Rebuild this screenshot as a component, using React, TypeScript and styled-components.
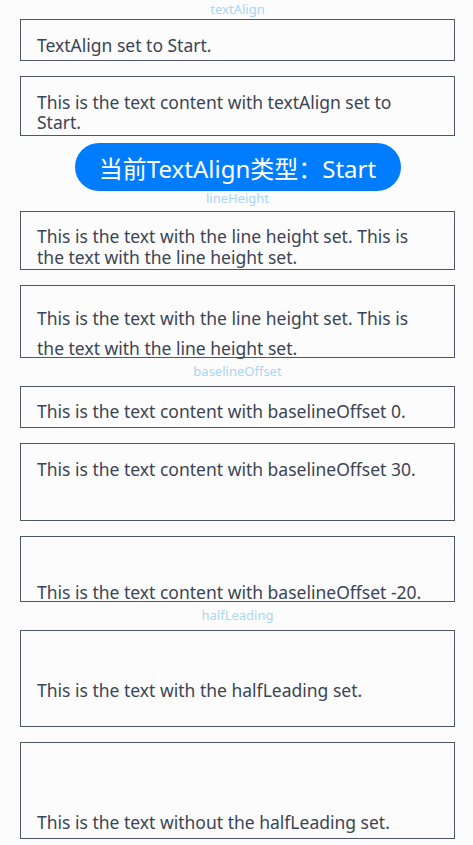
import React from "react";
import styled, { createGlobalStyle } from "styled-components";

const GlobalStyle = createGlobalStyle`
  html, body {
    margin: 0;
    padding: 0;
    background: #fcfcfc;
  }
  body {
    font-family: "Noto Sans", "Noto Sans CJK SC", sans-serif;
  }
`;

const Page = styled.div`
  display: flex;
  flex-direction: column;
  align-items: center;
  width: 473px;
  min-height: 845px;
  padding-left: 2px;
  box-sizing: border-box;
`;

const SectionLabel = styled.div<{ $top: number; $height?: number }>`
  margin-top: ${(p) => p.$top}px;
  height: ${(p) => p.$height ?? 15}px;
  font-size: 13px;
  line-height: ${(p) => p.$height ?? 15}px;
  color: #a9d6f5;
  text-align: center;
`;

const Box = styled.div<{ $top: number; $height: number; $pad: number }>`
  box-sizing: border-box;
  width: 435px;
  height: ${(p) => p.$height}px;
  margin-top: ${(p) => p.$top}px;
  padding: ${(p) => p.$pad}px 16px 0 16px;
  border: 1px solid #4f5665;
`;

const BoxText = styled.p<{ $lh?: number }>`
  margin: 0;
  font-size: 17.5px;
  line-height: ${(p) => p.$lh ?? 20}px;
  color: #3b4455;
`;

const TypeButton = styled.button`
  margin-top: 7px;
  width: 326px;
  height: 48px;
  border: none;
  border-radius: 24px;
  background: #007dff;
  color: #ffffff;
  font-family: "Noto Sans", "Noto Sans CJK SC", sans-serif;
  font-size: 24px;
  padding: 0;
  cursor: pointer;
`;

export default function App() {
  return (
    <>
      <GlobalStyle />
      <Page>
        <SectionLabel $top={0} $height={18}>textAlign</SectionLabel>
        <Box $top={1} $height={42} $pad={15}>
          <BoxText>TextAlign set to Start.</BoxText>
        </Box>
        <Box $top={15} $height={60} $pad={15}>
          <BoxText>This is the text content with textAlign set to Start.</BoxText>
        </Box>
        <TypeButton>当前TextAlign类型：Start</TypeButton>

        <SectionLabel $top={0}>lineHeight</SectionLabel>
        <Box $top={5} $height={59} $pad={14}>
          <BoxText $lh={21}>
            This is the text with the line height set. This is the text with the line height set.
          </BoxText>
        </Box>
        <Box $top={15} $height={73} $pad={17}>
          <BoxText $lh={30}>
            This is the text with the line height set. This is the text with the line height set.
          </BoxText>
        </Box>

        <SectionLabel $top={6}>baselineOffset</SectionLabel>
        <Box $top={7} $height={42} $pad={14}>
          <BoxText>This is the text content with baselineOffset 0.</BoxText>
        </Box>
        <Box $top={15} $height={78} $pad={15}>
          <BoxText>This is the text content with baselineOffset 30.</BoxText>
        </Box>
        <Box $top={15} $height={66} $pad={45}>
          <BoxText>This is the text content with baselineOffset -20.</BoxText>
        </Box>

        <SectionLabel $top={6}>halfLeading</SectionLabel>
        <Box $top={7} $height={97} $pad={49}>
          <BoxText>This is the text with the halfLeading set.</BoxText>
        </Box>
        <Box $top={15} $height={97} $pad={69}>
          <BoxText>This is the text without the halfLeading set.</BoxText>
        </Box>
      </Page>
    </>
  );
}
